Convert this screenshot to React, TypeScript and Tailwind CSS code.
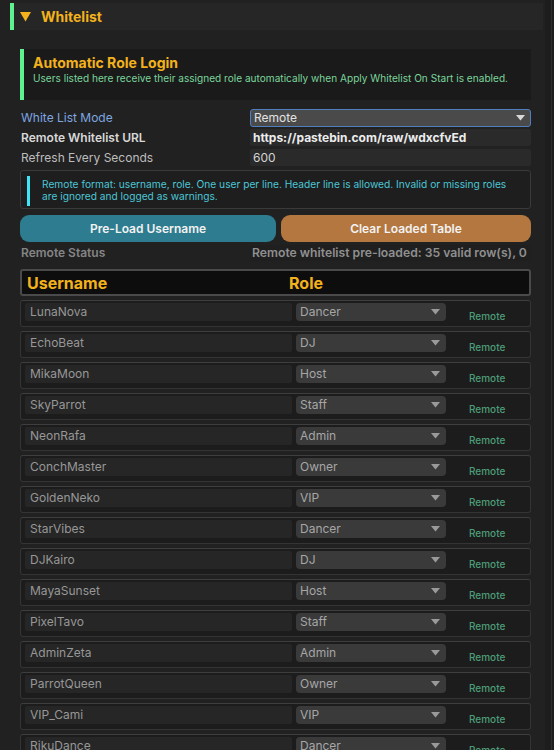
import React from "react";

const rows: [string, string][] = [
  ["LunaNova", "Dancer"],
  ["EchoBeat", "DJ"],
  ["MikaMoon", "Host"],
  ["SkyParrot", "Staff"],
  ["NeonRafa", "Admin"],
  ["ConchMaster", "Owner"],
  ["GoldenNeko", "VIP"],
  ["StarVibes", "Dancer"],
  ["DJKairo", "DJ"],
  ["MayaSunset", "Host"],
  ["PixelTavo", "Staff"],
  ["AdminZeta", "Admin"],
  ["ParrotQueen", "Owner"],
  ["VIP_Cami", "VIP"],
  ["RikuDance", "Dancer"],
];

const Caret = ({ color = "#d8d8d8" }: { color?: string }) => (
  <svg width="9" height="6" viewBox="0 0 9 6">
    <polygon points="0,0 9,0 4.5,5.5" fill={color} />
  </svg>
);

const FieldRow = ({
  label,
  labelClass,
  children,
}: {
  label: string;
  labelClass: string;
  children: React.ReactNode;
}) => (
  <div className="flex items-center h-[17px]">
    <div className={`w-[230px] pl-px text-[12px] ${labelClass}`}>{label}</div>
    {children}
  </div>
);

const WhitelistRow = ({ name, role }: { name: string; role: string }) => (
  <div className="flex shrink-0 h-[27px] rounded-[3px] border border-[#343434] border-t-[#3e3e3e] bg-[#1c1c1c] pl-[4px] pt-[2px]">
    <div className="w-[267px] h-[18px] rounded-[2px] bg-[#262626] pl-[5px] text-[12px] leading-[18px] text-[#979797]">
      {name}
    </div>
    <div className="ml-[4px] w-[150px] h-[18px] rounded-[4px] bg-[#3a3a3a] pl-[4px] pr-[6px] flex items-center justify-between text-[12px] text-[#a6a6a6]">
      <span className="leading-[18px]">{role}</span>
      <Caret color="#9a9a9a" />
    </div>
    <div className="ml-[23px] pt-[6px] text-[10px] font-medium text-[#4c9c78]">Remote</div>
  </div>
);

export default function App() {
  return (
    <div
      className="w-[554px] h-[750px] overflow-hidden flex bg-[#212121]"
      style={{ fontFamily: "Inter, 'Noto Sans', sans-serif" }}
    >
      <div className="w-[545px] shrink-0">
        {/* foldout header */}
        <div className="mt-[3px] ml-[10px] mr-[2px] h-[27px] flex">
          <div className="w-[4px] bg-[#5ff08f]" />
          <div className="flex-1 bg-[#262626] flex items-center pl-[6px]">
            <svg width="11" height="10" viewBox="0 0 11 10">
              <polygon points="0,0 11,0 5.5,9.5" fill="#f3b21c" />
            </svg>
            <span className="ml-[10px] text-[14px] font-bold text-[#f3b21c]">Whitelist</span>
          </div>
        </div>

        <div className="pl-[20px] pr-[14px] flex flex-col">
          {/* intro card */}
          <div className="mt-[19px] h-[51px] flex bg-[#1a1a1a]">
            <div className="w-[4px] bg-[#5ff08f]" />
            <div className="pl-[9px] pt-[5px]">
              <div className="text-[14px] font-bold leading-[18px] text-[#f3b21c]">Automatic Role Login</div>
              <div className="text-[10.1px] leading-[13px] text-[#7bd59a] whitespace-nowrap">
                Users listed here receive their assigned role automatically when Apply Whitelist On Start is enabled.
              </div>
            </div>
          </div>

          {/* settings */}
          <div className="mt-[9px] flex flex-col gap-[3px]">
            <FieldRow label="White List Mode" labelClass="text-[#7ea6e0]">
              <div className="w-[281px] h-[18px] rounded-[3px] border border-[#4f7fbd] bg-[#4a4a4a] pl-[3px] pr-[5px] flex items-center justify-between text-[12px] text-[#e2e2e2]">
                <span>Remote</span>
                <Caret />
              </div>
            </FieldRow>
            <FieldRow label="Remote Whitelist URL" labelClass="font-semibold text-[#d8d8d8]">
              <div className="w-[281px] h-[17px] rounded-[2px] bg-[#2a2a2a] pl-[3px] flex items-center text-[12px] font-bold text-[#ececec]">
                https://pastebin.com/raw/wdxcfvEd
              </div>
            </FieldRow>
            <FieldRow label="Refresh Every Seconds" labelClass="text-[#bdbdbd]">
              <div className="w-[281px] h-[17px] rounded-[2px] bg-[#2a2a2a] pl-[3px] flex items-center text-[12px] text-[#d4d4d4]">
                600
              </div>
            </FieldRow>
          </div>

          {/* remote format note */}
          <div className="mt-[4px] h-[39px] rounded-[3px] border border-[#3a3a3a] bg-[#1e1e1e] flex pl-[6px] pt-[5px]">
            <div className="w-[3px] h-[30px] bg-[#3fe4f5]" />
            <div className="pl-[12px] pt-[2px] text-[10.2px] leading-[12px] text-[#4cc6d6] whitespace-nowrap">
              Remote format: username, role. One user per line. Header line is allowed. Invalid or missing roles
              <br />
              are ignored and logged as warnings.
            </div>
          </div>

          {/* actions */}
          <div className="mt-[6px] flex gap-[5px] h-[27px]">
            <button className="w-[256px] rounded-[9px] bg-[#2e7c8f] text-[12px] font-semibold text-[#f2f2f2]">
              Pre-Load Username
            </button>
            <button className="flex-1 rounded-[9px] bg-[#b3773f] text-[12px] font-semibold text-[#f2f2f2]">
              Clear Loaded Table
            </button>
          </div>

          <div className="mt-[3px] h-[16px] flex items-center">
            <div className="w-[230px] pl-px text-[12px] font-semibold text-[#858585]">Remote Status</div>
            <div className="flex-1 h-[16px] bg-[#1f1f1f] pl-[2px] text-[12.2px] leading-[16px] font-semibold text-[#8f8f8f] whitespace-nowrap overflow-hidden">
              Remote whitelist pre-loaded: 35 valid row(s), 0
            </div>
          </div>

          {/* table */}
          <div className="mt-[8px] h-[27px] rounded-[3px] border-2 border-[#4a4a4a] bg-[#0d0d0d] flex items-center">
            <div className="w-[267px] pl-[5px] text-[16px] font-bold text-[#f3b21c]">Username</div>
            <div className="text-[16px] font-bold text-[#f3b21c]">Role</div>
          </div>
          <div className="mt-[4px] flex flex-col gap-[4px]">
            {rows.map(([name, role]) => (
              <WhitelistRow key={name} name={name} role={role} />
            ))}
          </div>
        </div>
      </div>
      <div className="flex-1 bg-[#1d1d1d] flex justify-end">
        <div className="w-px mr-[2px] bg-[#2e2e2e]" />
      </div>
    </div>
  );
}
